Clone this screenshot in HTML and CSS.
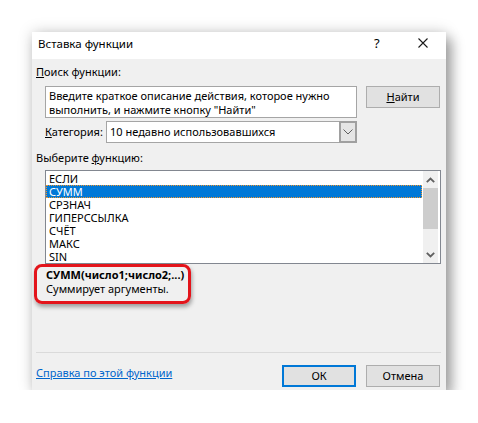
FILE: index.html
```html
<!DOCTYPE html>
<html lang="ru">
<head>
  <meta charset="UTF-8">
  <meta name="viewport" content="width=device-width, initial-scale=1.0">
  <title>Вставка функции</title>
  <link rel="stylesheet" href="styles.css">
</head>
<body>

  <div class="dialog">
    <!-- Title bar -->
    <div class="titlebar">
      <span class="title">Вставка функции</span>
      <span class="help">?</span>
      <span class="close">
        <svg width="10" height="10" viewBox="0 0 10 10"><path d="M0.5 0.5 L9.5 9.5 M9.5 0.5 L0.5 9.5" stroke="#1a1a1a" stroke-width="1.1" fill="none"/></svg>
      </span>
    </div>

    <div class="content">
      <div class="label"><u>П</u>оиск функции:</div>

      <div class="search-row">
        <div class="search-box">Введите краткое описание действия, которое нужно<br>выполнить, и нажмите кнопку "Найти"</div>
        <button class="btn find-btn"><u>Н</u>айти</button>
      </div>

      <div class="category-row">
        <span class="cat-label"><u>К</u>атегория:</span>
        <div class="select">
          <span class="select-value">10 недавно использовавшихся</span>
          <span class="select-btn">
            <svg width="10" height="6" viewBox="0 0 10 6"><path d="M0.5 0.5 L5 5 L9.5 0.5" stroke="#606060" stroke-width="1" fill="none"/></svg>
          </span>
        </div>
      </div>

      <div class="label label-list">Выберите <u>ф</u>ункцию:</div>

      <!-- Function list -->
      <div class="listbox">
        <ul class="items">
          <li>ЕСЛИ</li>
          <li class="selected">СУММ</li>
          <li>СРЗНАЧ</li>
          <li>ГИПЕРССЫЛКА</li>
          <li>СЧЁТ</li>
          <li>МАКС</li>
          <li>SIN</li>
        </ul>
        <div class="scrollbar">
          <div class="arrow">
            <svg width="9" height="6" viewBox="0 0 9 6"><path d="M0.8 5.2 L4.5 1.5 L8.2 5.2" stroke="#606060" stroke-width="1.8" fill="none"/></svg>
          </div>
          <div class="thumb"></div>
          <div class="track"></div>
          <div class="arrow">
            <svg width="9" height="6" viewBox="0 0 9 6"><path d="M0.8 0.8 L4.5 4.5 L8.2 0.8" stroke="#606060" stroke-width="1.8" fill="none"/></svg>
          </div>
        </div>
      </div>

      <!-- Description -->
      <div class="desc">
        <div class="desc-sig">СУММ(число1;число2;...)</div>
        <div class="desc-text">Суммирует аргументы.</div>
        <div class="highlight"></div>
      </div>

      <div class="separator"></div>

      <div class="footer">
        <a href="#" class="help-link">Справка по этой функции</a>
        <div class="buttons">
          <button class="btn ok-btn">ОК</button>
          <button class="btn">Отмена</button>
        </div>
      </div>
    </div>
  </div>

</body>
</html>
```

FILE: styles.css
```css
body {
  margin: 0;
  padding: 0;
  background-color: white;
  font-family: "Noto Sans", "DejaVu Sans", sans-serif;
  font-size: 11px;
  color: #000;
}

.dialog {
  margin: 32px 0 0 32px;
  width: 414px;
  height: 358px;
  background-color: #f0f0f0;
  box-shadow: 0 0 14px rgba(0, 0, 0, 0.18), 6px 7px 12px rgba(0, 0, 0, 0.32);
}

/* Title bar */
.titlebar {
  height: 27px;
  background-color: white;
  display: flex;
  align-items: flex-start;
  line-height: 23px;
}

.title {
  padding-left: 6px;
  flex: 1;
  font-size: 11.5px;
}

.help {
  width: 10px;
  font-size: 13px;
  margin-right: 34px;
}

.close {
  width: 10px;
  height: 10px;
  margin-top: 6px;
  margin-right: 18px;
}

.close svg {
  display: block;
}

/* Content */
.content {
  padding: 5px 5px 0 4px;
}

.label {
  line-height: 16px;
  height: 16px;
}

.label-list {
  margin-top: 7px;
}

.search-row {
  display: flex;
  margin-top: 6px;
  margin-left: 9px;
  align-items: flex-start;
}

.search-box {
  box-sizing: border-box;
  width: 312px;
  height: 32px;
  background-color: white;
  border: 1px solid #a5a5a5;
  padding: 2px 3px;
  line-height: 14px;
  white-space: nowrap;
  overflow: hidden;
}

.btn {
  box-sizing: border-box;
  width: 74px;
  height: 22px;
  background-color: #e1e1e1;
  border: 1px solid #adadad;
  font-family: inherit;
  font-size: 11px;
  color: #000;
  padding: 0;
  line-height: 18px;
}

.find-btn {
  margin-left: 9px;
}

.category-row {
  display: flex;
  margin-top: 3px;
  margin-left: 9px;
  height: 22px;
  align-items: center;
}

.cat-label {
  width: 61px;
  line-height: 16px;
}

.select {
  box-sizing: border-box;
  width: 251px;
  height: 22px;
  background-color: white;
  border: 1px solid #a5a5a5;
  display: flex;
}

.select-value {
  flex: 1;
  padding-left: 3px;
  line-height: 19px;
}

.select-btn {
  box-sizing: border-box;
  width: 18px;
  margin: -1px -1px -1px 0;
  background-color: #e5e5e5;
  border: 2px solid #a0a0a0;
  display: flex;
  align-items: center;
  justify-content: center;
}

/* List box */
.listbox {
  box-sizing: border-box;
  margin-top: 4px;
  margin-left: 9px;
  width: 396px;
  height: 94px;
  background-color: white;
  border: 1px solid #828790;
  display: flex;
}

.items {
  list-style: none;
  margin: 0;
  padding: 1px 0 0 0;
  flex: 1;
}

.items li {
  box-sizing: border-box;
  height: 13px;
  line-height: 13px;
  padding-left: 3px;
}

.items li.selected {
  background-color: #0078d7;
  color: white;
  border: 1px dotted #f0962d;
  padding-left: 2px;
  line-height: 11px;
}

.scrollbar {
  width: 15px;
  margin-left: 1px;
  margin-right: 2px;
  background-color: #f0f0f0;
  display: flex;
  flex-direction: column;
}

.arrow {
  height: 17px;
  display: flex;
  align-items: center;
  justify-content: center;
}

.thumb {
  height: 41px;
  background-color: #cdcdcd;
}

.track {
  flex: 1;
}

/* Description */
.desc {
  position: relative;
  margin-top: 4px;
  margin-left: 10px;
  line-height: 14px;
}

.desc-sig {
  font-weight: bold;
}

.highlight {
  position: absolute;
  left: -12px;
  top: -4px;
  width: 157px;
  height: 40px;
  box-sizing: border-box;
  border: 3px solid #e3141b;
  border-radius: 8px;
  box-shadow: 1px 3px 4px rgba(0, 0, 0, 0.35);
}

.separator {
  margin-top: 56px;
  height: 1px;
  background-color: #dadada;
}

.footer {
  display: flex;
  align-items: flex-start;
  margin-top: 12px;
}

.help-link {
  flex: 1;
  line-height: 16px;
  color: #0066cc;
  text-decoration: underline;
}

.buttons {
  display: flex;
  gap: 10px;
  margin-right: 1px;
}

.ok-btn {
  border: 2px solid #0078d7;
  line-height: 18px;
}
```
